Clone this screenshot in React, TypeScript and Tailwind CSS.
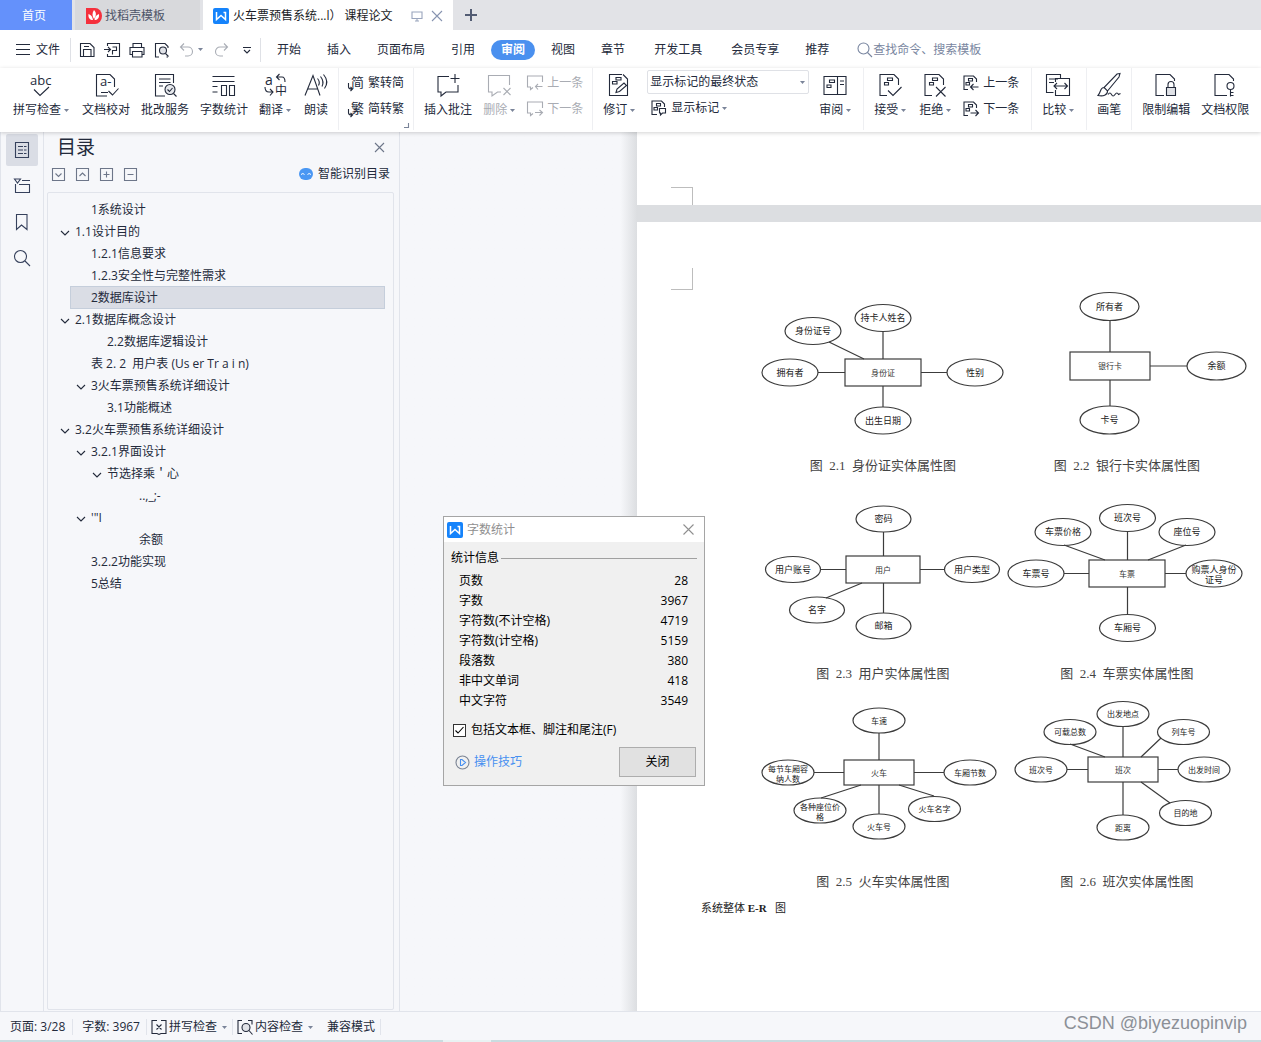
// src/App.tsx

import { useState } from 'react';
import type { ReactNode } from 'react';

const menuTabs = [
  { label: '开始' }, { label: '插入' }, { label: '页面布局' }, { label: '引用' },
  { label: '审阅' }, { label: '视图' }, { label: '章节' },
  { label: '开发工具', wide: true }, { label: '会员专享', wide: true }, { label: '推荐' },
];

const outline = [
  { text: '1系统设计', level: 1 },
  { text: '1.1设计目的', level: 0, open: true },
  { text: '1.2.1信息要求', level: 1 },
  { text: '1.2.3安全性与完整性需求', level: 1 },
  { text: '2数据库设计', level: 1, selected: true },
  { text: '2.1数据库概念设计', level: 0, open: true },
  { text: '2.2数据库逻辑设计', level: 2 },
  { text: '表 2. 2  用户表 (Us er Tr a i n)', level: 1 },
  { text: '3火车票预售系统详细设计', level: 1, open: true },
  { text: '3.1功能概述', level: 2 },
  { text: '3.2火车票预售系统详细设计', level: 0, open: true },
  { text: '3.2.1界面设计', level: 1, open: true },
  { text: '节选择乘＇心', level: 2, open: true },
  { text: '..,_;-', level: 4 },
  { text: '\'"I', level: 1, open: true },
  { text: '余额', level: 4 },
  { text: '3.2.2功能实现', level: 1 },
  { text: '5总结', level: 1 },
];

const indents = ['pl-0', 'pl-4', 'pl-8', 'pl-12', 'pl-16'];

const stats = [
  ['页数', '28'],
  ['字数', '3967'],
  ['字符数(不计空格)', '4719'],
  ['字符数(计空格)', '5159'],
  ['段落数', '380'],
  ['非中文单词', '418'],
  ['中文字符', '3549'],
];

type Diagram = {
  caption: string;
  viewBox: string;
  rx: number;
  ry: number;
  font: number;
  box: [number, number, number, number, string];
  lines: string;
  nodes: [number, number, string, string?][];
};

const diagrams: Diagram[] = [
  {
    caption: '图  2.1  身份证实体属性图', viewBox: '761 285 244 173', rx: 28, ry: 13.5, font: 9,
    box: [845, 359, 76, 27, '身份证'],
    lines: 'M883 331V359M883 386V407M818 372.500H845M921 372.500H947M829 342L864 359',
    nodes: [[813, 331, '身份证号'], [883, 318, '持卡人姓名'], [790, 372.5, '拥有者'], [975, 372.5, '性别'], [883, 420.5, '出生日期']],
  },
  {
    caption: '图  2.2  银行卡实体属性图', viewBox: '1005 285 244 173', rx: 29.5, ry: 14, font: 9,
    box: [1070, 352, 80, 28, '银行卡'],
    lines: 'M1110 321V352M1110 380V406M1150 366H1187',
    nodes: [[1109.5, 306.5, '所有者'], [1216.5, 366, '余额'], [1109.5, 420, '卡号']],
  },
  {
    caption: '图  2.3  用户实体属性图', viewBox: '761 493 244 173', rx: 27.5, ry: 13, font: 9,
    box: [846, 556, 74, 27, '用户'],
    lines: 'M883.500 532V556M883.500 583V613M820 569.500H846M920 569.500H945M826 598L862 583',
    nodes: [[883.5, 519, '密码'], [793, 569.5, '用户账号'], [972, 569.5, '用户类型'], [817, 610, '名字'], [883.5, 626, '邮箱']],
  },
  {
    caption: '图  2.4  车票实体属性图', viewBox: '1005 493 244 173', rx: 28, ry: 13.5, font: 9,
    box: [1089, 560, 76, 27, '车票'],
    lines: 'M1127.500 532V560M1127.500 587V614M1064 573.500H1089M1165 573.500H1186M1064 545L1105 560M1186 545L1148 560',
    nodes: [[1127.5, 518, '班次号'], [1063, 532, '车票价格'], [1187, 532, '座位号'], [1036, 573.5, '车票号'], [1214, 573.5, '购票人身份', '证号'], [1127.5, 628, '车厢号']],
  },
  {
    caption: '图  2.5  火车实体属性图', viewBox: '761 701 244 173', rx: 26, ry: 12.5, font: 8,
    box: [844, 760, 70, 25, '火车'],
    lines: 'M879 733V760M879 785V814M814 772.500H844M914 772.500H944M821 798L861 785M934 796L899 785',
    nodes: [[879, 720.5, '车速'], [788, 772.5, '每节车厢容', '纳人数'], [970, 772.5, '车厢节数'], [820, 810.5, '各种座位价', '格'], [934.5, 809, '火车名字'], [879, 826.5, '火车号']],
  },
  {
    caption: '图  2.6  班次实体属性图', viewBox: '1005 701 244 173', rx: 26, ry: 12.5, font: 8,
    box: [1088, 757, 70, 25, '班次'],
    lines: 'M1123 727V757M1123 782V815M1067 769.500H1088M1158 769.500H1178M1070 744L1105 757M1161 738L1141 757M1141 782L1170 803',
    nodes: [[1123, 714, '出发地点'], [1070, 732, '可载总数'], [1183.5, 732, '列车号'], [1041, 769.5, '班次号'], [1204, 769.5, '出发时间'], [1185.5, 813, '目的地'], [1123, 827.5, '距离']],
  },
];

function Icon({ size = 24, children, className = '' }: { size?: number; children: ReactNode; className?: string }) {
  return (
    <svg width={size} height={size} viewBox={`0 0 ${size} ${size}`} fill="none" stroke="currentColor" strokeWidth="1.1" className={`shrink-0 overflow-visible ${className}`} aria-hidden="true">
      {children}
    </svg>
  );
}

function Caret() {
  return <svg width="5" height="3" viewBox="0 0 5 3" className="ml-[3px] shrink-0 fill-[#7a8499]"><path d="M0 0h5L2.500 3z" /></svg>;
}

function BigButton({ label, caret, disabled, children }: { label: string; caret?: boolean; disabled?: boolean; children: ReactNode }) {
  return (
    <button disabled={disabled} className={`flex shrink-0 flex-col items-center gap-1 self-start pt-[5px] pl-[10px] ${caret ? 'pr-[3px]' : 'pr-px'} ${disabled ? 'text-[#a9acb3]' : ''}`}>
      <Icon>{children}</Icon>
      <span className="flex items-center leading-[18px]">{label}{caret && <Caret />}</span>
    </button>
  );
}

function SmallButton({ label, caret, disabled, children }: { label: string; caret?: boolean; disabled?: boolean; children: ReactNode }) {
  return (
    <button disabled={disabled} className={`flex shrink-0 items-center gap-1 leading-4 ${disabled ? 'text-[#a9acb3]' : ''}`}>
      <Icon size={16}>{children}</Icon>
      <span className="flex items-center">{label}{caret && <Caret />}</span>
    </button>
  );
}

function Group({ first, children }: { first?: boolean; children: ReactNode }) {
  return <div className={`flex shrink-0 pr-[9px] ${first ? 'pl-[3px]' : 'border-l border-[#eeeff2]'}`}>{children}</div>;
}

function WpsLogo() {
  return (
    <svg width="16" height="16" viewBox="0 0 16 16" className="shrink-0" aria-hidden="true">
      <rect width="16" height="16" rx="2" fill="#1583fb" />
      <path d="M3.500 4v7.500L8 7.500l4.500 4V4.500H10.500" fill="none" stroke="#fff" strokeWidth="1.500" />
    </svg>
  );
}

const pageMarks = <path d="M9.500 5h5v2.500h-5zM6.500 9.500h4v2.500h-4z" />;

function TabBar() {
  return (
    <div className="flex h-[30px] bg-[#e2e3e7]">
      <button className="w-[72px] bg-[#6491fb] pt-px pr-1 text-white">首页</button>
      <button className="ml-[3px] flex w-[125px] items-center gap-[3px] bg-[#d8d9dc] pt-[2px] pl-[11px] text-[#4d5468]">
        <svg width="16" height="16" viewBox="0 0 16 16" className="shrink-0" aria-hidden="true">
          <path d="M0 0h9a7 8 0 0 1 0 16H0z" fill="#f5303c" />
          <path d="M8 2c3 3 2 6 0 9C6 8 6 5 8 2zM2.500 6c3 1 4 3 4.500 6-3 0-5-2-4.500-6zM13 6c-3 1-4 3-4.500 6 3 0 5-2 4.500-6z" fill="#fff" />
        </svg>
        找稻壳模板
      </button>
      <div className="ml-[3px] flex w-[250px] items-center bg-white pt-[2px] pl-[10px] text-[#1a1d26]">
        <WpsLogo />
        <span className="ml-1 whitespace-pre">火车票预售系统...l） 课程论文</span>
        <Icon size={12} className="ml-auto text-[#9aa5bd]"><path d="M1 2h10v6.500H1zM6 8.500V11M4 11h4" /></Icon>
        <button aria-label="关闭标签" className="mr-[10px] ml-2 text-[#8794b0]">
          <Icon size={12}><path d="M1 1l10 10M11 1L1 11" /></Icon>
        </button>
      </div>
      <button aria-label="新建标签" className="ml-3 text-[#525c73]">
        <svg width="12" height="12" viewBox="0 0 12 12" stroke="currentColor" strokeWidth="2" aria-hidden="true"><path d="M6 0v12M0 6h12" /></svg>
      </button>
    </div>
  );
}

function MenuBar() {
  return (
    <div className="flex h-[38px] items-center bg-white pt-px">
      <button className="ml-4 flex items-center gap-[6px]">
        <Icon size={14}><path d="M0 1.500h14M0 6.500h14M0 11.500h14" /></Icon>
        文件
      </button>
      <div className="ml-[10px] flex h-6 items-center gap-[9px] border-x border-[#dfe1e6] px-[8px]">
        <button aria-label="保存"><Icon size={16}><path d="M1.500 1.500h9.500l4 4v9h-13.500zM4.500 14.500V7.500h7.500v7M5 4.500h5" /></Icon></button>
        <button aria-label="输出为PDF"><Icon size={16}><path d="M3.500 4V1.500h12v13h-12V12M0 7.500h6M4 5l2.500 2.500L4 10M8.500 5h4v3.500h-4v4" /></Icon></button>
        <button aria-label="打印"><Icon size={16}><path d="M4 5V1.500h8.500V5M3.500 12.500H1V5.500h14v7h-2.500M3.500 9.500h9.500v5.500H3.500z" /></Icon></button>
        <button aria-label="打印预览"><Icon size={16}><path d="M5 15H1.500V1.500h9.500l3 3V6M12.500 15H14" /><circle cx="9" cy="8.500" r="3.500" fill="#e0e2e7" /><path d="M11.500 11.500l3 3" /></Icon></button>
        <button aria-label="撤销" className="flex items-center text-[#a9adb5]"><Icon size={16}><path d="M5 1.500L1.500 5 5 8.500M1.500 5H9a4.500 4.500 0 0 1 0 9H6" /></Icon><Caret /></button>
        <button aria-label="恢复" className="ml-px text-[#a9adb5]"><Icon size={16}><path d="M11 1.500L14.500 5 11 8.500M14.500 5H7a4.500 4.500 0 0 0 0 9h3" /></Icon></button>
        <button aria-label="自定义" className="ml-1"><Icon size={10}><path d="M1 2.500h8M2 5l3 3 3-3" /></Icon></button>
      </div>
      <nav className="ml-[3px] flex items-center">
        {menuTabs.map((tab) => (
          tab.label === '审阅'
            ? <button key={tab.label} className="mx-[3px] h-5 rounded-full bg-[#4a90ef] px-[10px] font-bold text-white">{tab.label}</button>
            : <button key={tab.label} className={`shrink-0 pr-[13px] ${tab.wide ? 'pl-4' : 'pl-[13px]'}`}>{tab.label}</button>
        ))}
      </nav>
      <label className="ml-[15px] flex min-w-0 flex-1 items-center text-[#7986a0]">
        <Icon size={16}><circle cx="6.500" cy="6.500" r="5.500" /><path d="M10.500 10.500L15 15" /></Icon>
        <input className="w-full bg-transparent outline-none placeholder:text-[#7986a0]" aria-label="查找命令" placeholder="查找命令、搜索模板" />
      </label>
    </div>
  );
}

function Ribbon() {
  return (
    <div className="relative z-10 flex h-16 overflow-hidden bg-white pb-[2px] shadow-[0_1px_4px_rgba(0,0,0,0.18)]">
      <Group first>
        <BigButton label="拼写检查" caret>
          <text x="1" y="12" fontSize="13" fill="currentColor" stroke="none">abc</text>
          <path d="M5 16.500l6 6L20 14" />
        </BigButton>
        <BigButton label="文档校对">
          <path d="M13 23H2.500V1.500H16L20.500 6v8M7 19.500h7M14.500 18l4 4 6-6.500" />
          <text x="6" y="13" fontSize="13" fill="currentColor" stroke="none">a-</text>
        </BigButton>
        <BigButton label="批改服务">
          <path d="M12 23H2.500V1.500h18V10M6 6h11.500M6 9.500h11.500M6 13h4" />
          <circle cx="17" cy="16.500" r="5" fill="#e6e8ec" /><path d="M14.500 16.500l2 2 3-3.500M20.500 20.500l3 3" />
        </BigButton>
        <BigButton label="字数统计">
          <path d="M.5 3.500h22M.5 8.500h22M.5 13.500h5M.5 19h5M9.500 12.500h5v10h-5zM17.500 12.500h5v10h-5z" />
        </BigButton>
        <BigButton label="翻译" caret>
          <text x="2" y="12" fontSize="14" fill="currentColor" stroke="none">a</text>
          <text x="12" y="22" fontSize="12" fill="currentColor" stroke="none">中</text>
          <path d="M16.500 1L13.500 4l3 3M13.500 4H19q3 0 3 5M2 14q0 5 4 5h3.500M7 16l3 3-3 3.500" />
        </BigButton>
        <BigButton label="朗读">
          <path d="M1 22.500L9 2.500l7 20M4 16h9.500M13.500 5.500q3 3.500 1 7M16.500 3.500q4 5 1.500 10M19.500 1.500q6 7 1 14" />
        </BigButton>
      </Group>

      <Group>
        <div className="flex flex-col gap-[10px] pt-[7px] pl-[9px]">
          <SmallButton label="繁转简">
            <text x="3" y="12" fontSize="13" fill="currentColor" stroke="none">简</text>
            <path d="M.5 8v4q0 2 3.500 2M2.500 12l2 2-2 2" />
          </SmallButton>
          <SmallButton label="简转繁">
            <text x="3" y="12" fontSize="13" fill="currentColor" stroke="none">繁</text>
            <path d="M.5 8v4q0 2 3.500 2M2.500 12l2 2-2 2" />
          </SmallButton>
        </div>
        <Icon size={5} className="-mr-[5px] mb-[2px] self-end text-[#7a8499]"><path d="M4.500 0v4.500H0" /></Icon>
      </Group>

      <Group>
        <BigButton label="插入批注">
          <path d="M13 3.500H2V19h3v4l5-4h12v-7M19 1v9M14.500 5.500h9" />
        </BigButton>
        <BigButton label="删除" caret disabled>
          <path d="M14 19h-3.500L5 23v-4H1.500V2.500h21V12M16.500 15l7 7M23.500 15l-7 7" />
        </BigButton>
        <div className="flex flex-col gap-[10px] pt-[7px] pl-[9px]">
          <SmallButton label="上一条" disabled>
            <path d="M6 12.500L3.500 14.500v-2.500H.5V1h15v6M15.500 11.500H8.500M11 9l-2.500 2.500L11 14.500" />
          </SmallButton>
          <SmallButton label="下一条" disabled>
            <path d="M6 12.500L3.500 14.500v-2.500H.5V1h15v6M8 11.500h7M12.500 9l3 2.500-3 3" />
          </SmallButton>
        </div>
      </Group>

      <Group>
        <BigButton label="修订" caret>
          <path d="M15 1.500H2.500V22.500h18V6L16 1.500M9 19.500l1-3.500 7-6 2.500 2.500-7 6z" />
          <path d="M9 4.500h5V7H9zM5.500 8.500h4.500V11H5.500z" />
        </BigButton>
        <div className="flex flex-col gap-[6px] pt-[2px] pl-[9px]">
          <div className="relative">
            <select aria-label="显示标记状态" className="h-6 w-[162px] appearance-none rounded-xs border border-[#dfe1e6] bg-white pl-[2px] leading-4 outline-none">
              <option>显示标记的最终状态</option>
              <option>显示标记的原始状态</option>
            </select>
            <span className="pointer-events-none absolute top-[11px] right-1"><Caret /></span>
          </div>
          <div className="pl-1">
            <SmallButton label="显示标记" caret>
              <path d="M6 14.500H1V1h9.500l3 3v3M5.500 3.500h4V6h-4zM3 7.500h3.500V10H3zM8.500 8.500h6V13h-3l-2 2v-2h-1z" />
            </SmallButton>
          </div>
        </div>
        <BigButton label="审阅" caret>
          <path d="M1 3.500h22v18H1zM14.500 3.500v18M17 8h4M17 11.500h4M6.500 7h5v2.500h-5zM4 12h4v2.500H4z" />
        </BigButton>
      </Group>

      <Group>
        <BigButton label="接受" caret>
          <path d="M9 22.500H2V1.500h14L20.500 6v6M10 17.500l5 5 8.500-8.500" />{pageMarks}
        </BigButton>
        <BigButton label="拒绝" caret>
          <path d="M9 22.500H2V1.500h14L20.500 6v6M13 14l9.500 9.500M22.500 14L13 23.500" />{pageMarks}
        </BigButton>
        <div className="flex flex-col gap-[10px] pt-[7px] pr-[3px] pl-[9px]">
          <SmallButton label="上一条">
            <path d="M5 14.500H1V1h9.500l3 3v3M5.500 3.500h4V6h-4zM3 7.500h3.500V10H3zM15.500 12H8M10.500 9L7.500 12l3 3" />
          </SmallButton>
          <SmallButton label="下一条">
            <path d="M5 14.500H1V1h9.500l3 3v3M5.500 3.500h4V6h-4zM3 7.500h3.500V10H3zM7.500 12H15M12.500 9l3 3-3 3" />
          </SmallButton>
        </div>
      </Group>

      <Group>
        <BigButton label="比较" caret>
          <path d="M7.500 19.500H.5V1.500h14V5M3 6h9M3 9.500h5M9.500 9V5.500h14v17h-14V17M8.500 13h13M11 10l-3 3 3 3M18.500 10l3 3-3 3" />
        </BigButton>
      </Group>

      <Group>
        <BigButton label="画笔">
          <path d="M23 .5L20 1 7 14.500l3.500 3.500L22 4zM7 14.500c-4 0-3 5-6 8 5 1 9.500 0 9.500-4.500M11 21.500q2-3 3.500 0t3.500 0 3.500 0l2-1" />
        </BigButton>
      </Group>

      <Group>
        <BigButton label="限制编辑">
          <path d="M10 22.500H2V1.500h14L20.500 6v2M14 14v-2.500a3 3 0 0 1 6 0V14" /><path d="M12.500 14.500h9v8h-9z" fill="#e0e2e7" />
        </BigButton>
        <BigButton label="文档权限">
          <path d="M14 22.500H2V1.500h14L20.500 6v2M17.500 16.500v7M17.500 19.500h3M17.500 22.500h3" /><circle cx="17.500" cy="13" r="3.500" />
        </BigButton>
      </Group>
    </div>
  );
}

function SideRail() {
  return (
    <div className="flex w-11 shrink-0 flex-col gap-1 border-x border-[#e1e4eb] pt-[2px] pl-[5px] text-[#36415c]">
      <button aria-label="目录" className="flex size-8 items-center justify-center rounded-xs bg-[#dadde5]">
        <Icon size={16}><path d="M1.500.5h13v15h-13zM4 4.500h5M10 4.500h2.500M4 8h5M10 8h2.500M4 11.500h5M10 11.500h2.500" /></Icon>
      </button>
      <button aria-label="章节" className="flex size-8 items-center justify-center">
        <Icon size={16}><path d="M.5 1h6l-3 4zM8 2.500h8M1.500 6v8.500h14v-8H5" /></Icon>
      </button>
      <button aria-label="书签" className="flex size-8 items-center justify-center">
        <Icon size={16}><path d="M2.500.5h10.500v15L7.500 11l-5 4.500z" /></Icon>
      </button>
      <button aria-label="查找" className="flex size-8 items-center justify-center">
        <Icon size={16}><circle cx="6.500" cy="6.500" r="6" /><path d="M11 11l5 5" /></Icon>
      </button>
    </div>
  );
}

function OutlinePanel() {
  return (
    <aside className="flex w-[356px] shrink-0 flex-col border-r border-[#e1e4eb] pr-[5px] pl-[3px]">
      <div className="flex h-[30px] items-center justify-between pr-[9px] pl-[10px]">
        <h2 className="text-[19px] leading-[30px]">目录</h2>
        <button aria-label="关闭目录" className="text-[#6d7689]"><Icon size={11}><path d="M1 1l9 9M10 1l-9 9" /></Icon></button>
      </div>
      <div className="flex h-6 items-center gap-[11px] pl-[5px] text-[#6d7689]">
        <button aria-label="展开"><Icon size={13}><path d="M.5.5h12v12H.5zM3.500 5.500l3 3 3-3" /></Icon></button>
        <button aria-label="收起"><Icon size={13}><path d="M.5.5h12v12H.5zM3.500 8l3-3 3 3" /></Icon></button>
        <button aria-label="放大级别"><Icon size={13}><path d="M.5.5h12v12H.5zM3.500 6.500h6M6.500 3.500v6" /></Icon></button>
        <button aria-label="缩小级别"><Icon size={13}><path d="M.5.5h12v12H.5zM3.500 6.500h6" /></Icon></button>
        <button className="mr-1 ml-auto flex items-center gap-[5px] text-[#232a3b]">
          <svg width="14" height="12" viewBox="0 0 14 12" aria-hidden="true">
            <rect width="14" height="12" rx="6" fill="#4a97f3" />
            <path d="M2 6.500q2-2 3.500 0M8.500 6.500q1.500-2 3.500 0" fill="none" stroke="#fff" />
          </svg>
          智能识别目录
        </button>
      </div>
      <ul className="mt-[6px] mb-px flex-1 rounded-xs border border-[#e1e4eb] pt-[6px] pr-2 pl-3">
        {outline.map((item) => (
          <li key={item.text} className={`flex h-[22px] items-center whitespace-pre ${item.selected ? '' : indents[item.level]}`}>
            {item.selected ? (
              <a href="#outline" className="-mt-px ml-[10px] flex h-[23px] flex-1 items-center border border-[#c5cedb] bg-[#dadde5] pl-[20px]">{item.text}</a>
            ) : (
              <>
                <span className="w-[15px] shrink-0">
                  {item.open && <Icon size={10} className="mt-px"><path d="M1 3l4 4 4-4" /></Icon>}
                </span>
                <a href="#outline">{item.text}</a>
              </>
            )}
          </li>
        ))}
      </ul>
    </aside>
  );
}

function Figure({ diagram }: { diagram: Diagram }) {
  const [x, y, w, h, name] = diagram.box;
  return (
    <figure className="flex flex-col items-center">
      <svg width="244" height="173" viewBox={diagram.viewBox} className="overflow-visible" fill="none" stroke="#3c3c3c" strokeWidth="1.2" fontSize={diagram.font} textAnchor="middle">
        <path d={diagram.lines} />
        <rect x={x} y={y} width={w} height={h} />
        <text x={x + w / 2} y={y + h / 2 + 3} fontSize="8" fill="#333" stroke="none">{name}</text>
        {diagram.nodes.map(([cx, cy, text, second]) => (
          <g key={text}>
            <ellipse cx={cx} cy={cy} rx={diagram.rx} ry={diagram.ry} />
            <text x={cx} y={second ? cy - 1 : cy + 3} fill="#222" stroke="none">{text}</text>
            {second && <text x={cx} y={cy + 9} fill="#222" stroke="none">{second}</text>}
          </g>
        ))}
      </svg>
      <figcaption className="text-[13px] leading-4 whitespace-pre text-[#444]">{diagram.caption}</figcaption>
    </figure>
  );
}

function DocumentView() {
  return (
    <main className="flex min-w-0 flex-1 overflow-hidden">
      <div className="w-[237px] shrink-0 bg-linear-to-r from-[#f6f7fa] from-93% to-[#dcdee1]" />
      <div className="flex min-w-0 flex-1 flex-col bg-[#dcdee1] font-['Liberation_Serif','Noto_Sans_CJK_SC',serif]">
        <div className="flex h-[73px] items-end bg-white pl-[34px]">
          <div className="h-[18px] w-[22px] border-t border-r border-[#bdbdbd]" />
        </div>
        <article className="mt-[17px] flex-1 bg-white">
          <div className="h-[63px] pt-[46px] pl-[34px]">
            <div className="h-[22px] w-[22px] border-r border-b border-[#bdbdbd]" />
          </div>
          <div className="grid grid-cols-[244px_244px] gap-y-[19px] pl-[124px]">
            {diagrams.map((d) => <Figure key={d.caption} diagram={d} />)}
          </div>
          <p className="mt-[10px] pl-16 text-[11px] leading-4 whitespace-pre text-[#222]">系统整体 <b>E-R</b>{'   '}图</p>
        </article>
      </div>
    </main>
  );
}

function WordCountDialog({ onClose }: { onClose: () => void }) {
  const [includeNotes, setIncludeNotes] = useState(true);

  return (
    <div role="dialog" aria-label="字数统计" className="absolute top-[516px] left-[443px] z-20 w-[262px] border border-[#a5a5a5] bg-[#f0f0f0] pb-2 text-black">
      <div className="flex h-[25px] items-center bg-white pr-[10px] pl-[3px] text-[#8f8f8f]">
        <WpsLogo />
        <span className="ml-1">字数统计</span>
        <button aria-label="关闭" onClick={onClose} className="ml-auto"><Icon size={11}><path d="M.5.5l10 10M10.500.5l-10 10" /></Icon></button>
      </div>
      <div className="mt-2 flex items-center gap-[2px] pr-[7px] pl-[7px] leading-4">
        统计信息
        <div className="h-px flex-1 bg-[#a0a0a0]" />
      </div>
      <table className="mt-[5px] ml-[15px] w-[229px]">
        <tbody>
          {stats.map(([name, value]) => (
            <tr key={name} className="h-5">
              <th scope="row" className="p-0 text-left leading-5 font-normal">{name}</th>
              <td className="p-0 text-right leading-5">{value}</td>
            </tr>
          ))}
        </tbody>
      </table>
      <label className="mt-[11px] ml-[9px] flex items-center gap-[5px] leading-4">
        <span className="relative flex">
          <input type="checkbox" checked={includeNotes} onChange={(e) => setIncludeNotes(e.target.checked)} className="size-[13px] appearance-none border border-[#333] bg-white" />
          {includeNotes && <Icon size={13} className="pointer-events-none absolute inset-0"><path d="M2.500 6.500L5 9l5.500-6" /></Icon>}
        </span>
        包括文本框、脚注和尾注(F)
      </label>
      <div className="mt-[9px] flex items-center justify-between pr-2 pl-[11px]">
        <a href="#tips" className="flex items-center gap-1 text-[#468ff0]">
          <Icon size={15}><circle cx="7.500" cy="7.500" r="6.500" stroke="#7b8494" /><path d="M5.500 4.500h1.500l3.500 3-3.500 3H5.500z" /></Icon>
          操作技巧
        </a>
        <button onClick={onClose} className="h-[30px] w-[77px] border border-[#adadad] bg-[#e1e1e1]">关闭</button>
      </div>
    </div>
  );
}

function StatusBar() {
  return (
    <footer className="relative z-10 shrink-0 bg-[#f6f7fa]">
      <div className="flex h-[29px] items-center border-t border-[#e1e4eb] pt-[2px] pl-[10px]">
        <span>页面: 3/28</span>
        <span className="ml-[7px] border-l border-[#e1e4eb] pl-[9px]">字数: 3967</span>
        <button className="ml-[6px] flex items-center gap-[2px] border-l border-[#e1e4eb] pl-1">
          <Icon size={16}><path d="M6 1.500H1v13h5l2 1 2-1h5v-13h-5M5.500 5.500l5 5M10.500 5.500l-5 5" /></Icon>
          拼写检查<Caret />
        </button>
        <button className="ml-[5px] flex items-center gap-[2px] border-l border-[#e1e4eb] pl-1">
          <Icon size={16}><path d="M5 14.500H1v-13h4M11 1.500h4v4" /><circle cx="9" cy="8.500" r="4" fill="#e0e2e7" /><path d="M12 11.500l3.500 4" /></Icon>
          内容检查<Caret />
        </button>
        <span className="ml-[14px] border-r border-[#e1e4eb] pr-[5px]">兼容模式</span>
      </div>
      <div className="flex h-[2px] bg-[#c9dce0]">
        <div className="ml-[443px] w-12 bg-[#e9f2f3]" />
      </div>
      <div className="absolute right-[14px] bottom-[7px] font-['Liberation_Sans',sans-serif] text-[18px] leading-6 text-[#8c9097]">CSDN @biyezuopinvip</div>
    </footer>
  );
}

export default function App() {
  const [showCount, setShowCount] = useState(true);

  return (
    <div className="relative flex min-h-screen flex-col overflow-hidden bg-[#f6f7fa] font-['Open_Sans','Noto_Sans_CJK_SC',sans-serif] text-[12px] leading-4 text-[#232a3b]">
      <TabBar />
      <MenuBar />
      <Ribbon />
      <div className="flex flex-1">
        <SideRail />
        <OutlinePanel />
        <DocumentView />
      </div>
      <StatusBar />
      {showCount && <WordCountDialog onClose={() => setShowCount(false)} />}
    </div>
  );
}
